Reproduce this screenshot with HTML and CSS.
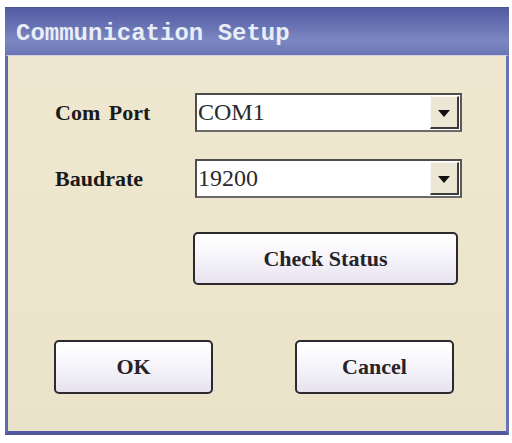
FILE: index.html
```html
<!DOCTYPE html>
<html>
<head>
<meta charset="utf-8">
<title>Communication Setup</title>
<link rel="stylesheet" href="styles.css">
</head>
<body>
<div class="window">
  <div class="titlebar">Communication Setup</div>
  <div class="client">
    <div class="field-row">
      <span class="label">Com Port</span>
      <div class="combo">
        <span class="combo-value">COM1</span>
        <span class="combo-btn"><span class="arrow"></span></span>
      </div>
    </div>
    <div class="field-row second">
      <span class="label">Baudrate</span>
      <div class="combo">
        <span class="combo-value">19200</span>
        <span class="combo-btn"><span class="arrow"></span></span>
      </div>
    </div>
    <div class="status-row">
      <button class="btn btn-status">Check Status</button>
    </div>
    <div class="action-row">
      <button class="btn btn-action">OK</button>
      <button class="btn btn-action">Cancel</button>
    </div>
  </div>
</div>
</body>
</html>
```

FILE: styles.css
```css
html, body {
  margin: 0;
  padding: 0;
  background: #ffffff;
}

body {
  width: 512px;
  height: 443px;
  overflow: hidden;
}

.window {
  margin: 7px 3px 0 5px;
  width: 504px;
  display: flex;
  flex-direction: column;
}

.titlebar {
  height: 48px;
  box-sizing: border-box;
  padding: 3px 0 0 11px;
  display: flex;
  align-items: center;
  background: linear-gradient(180deg, #545ca2 0%, #6670b2 35%, #7c88c2 70%, #6a74b4 100%);
  border-top: 1px solid #4a5298;
  color: #e8eef8;
  font-family: "Liberation Mono", "DejaVu Sans Mono", monospace;
  font-weight: bold;
  font-size: 24px;
  white-space: nowrap;
}

.client {
  height: 380px;
  box-sizing: border-box;
  background: linear-gradient(180deg, #efe7cf 0%, #ebe3c9 100%);
  border-top: 1px solid #d8d2e6;
  border-left: 3px solid #6068b0;
  border-right: 3px solid #6a72b6;
  border-bottom: 4px solid #5058a2;
  padding: 37px 0 0 47px;
  display: flex;
  flex-direction: column;
  font-family: "Liberation Serif", "Times New Roman", serif;
  color: #1a1a1a;
}

.field-row {
  display: flex;
  align-items: center;
  height: 39px;
}

.field-row.second {
  margin-top: 27px;
}

.label {
  width: 140px;
  font-weight: bold;
  font-size: 22px;
  word-spacing: 3px;
}

.combo {
  width: 267px;
  height: 39px;
  box-sizing: border-box;
  border-top: 2px solid #4d4d4d;
  border-left: 2px solid #4d4d4d;
  border-right: 2px solid #5a5a5a;
  border-bottom: 2px solid #6a6a6a;
  background: #ffffff;
  display: flex;
  align-items: center;
  padding: 0 1px 0 1px;
}

.combo-value {
  flex: 1;
  font-size: 24px;
  color: #2a2a2a;
}

.combo-btn {
  width: 29px;
  height: 33px;
  box-sizing: border-box;
  background: #ece6d4;
  border-right: 2px solid #3c3c3c;
  border-bottom: 2px solid #3c3c3c;
  border-left: 1px solid #faf8f0;
  border-top: 1px solid #faf8f0;
  display: flex;
  align-items: center;
  justify-content: center;
}

.arrow {
  width: 0;
  height: 0;
  border-left: 6px solid transparent;
  border-right: 6px solid transparent;
  border-top: 7px solid #111;
  margin-top: 2px;
}

.status-row {
  margin-top: 34px;
  padding-left: 138px;
  display: flex;
}

.btn {
  box-sizing: border-box;
  border: 2px solid #2c2a2e;
  border-radius: 5px;
  background: linear-gradient(180deg, #ffffff 0%, #f6f4fa 50%, #e6e2ee 100%);
  font-family: "Liberation Serif", "Times New Roman", serif;
  font-weight: bold;
  font-size: 22px;
  color: #262428;
  padding: 0;
  margin: 0;
}

.btn-status {
  width: 265px;
  height: 53px;
}

.action-row {
  margin-top: 55px;
  margin-left: -1px;
  display: flex;
  gap: 82px;
}

.btn-action {
  width: 159px;
  height: 54px;
}
```
